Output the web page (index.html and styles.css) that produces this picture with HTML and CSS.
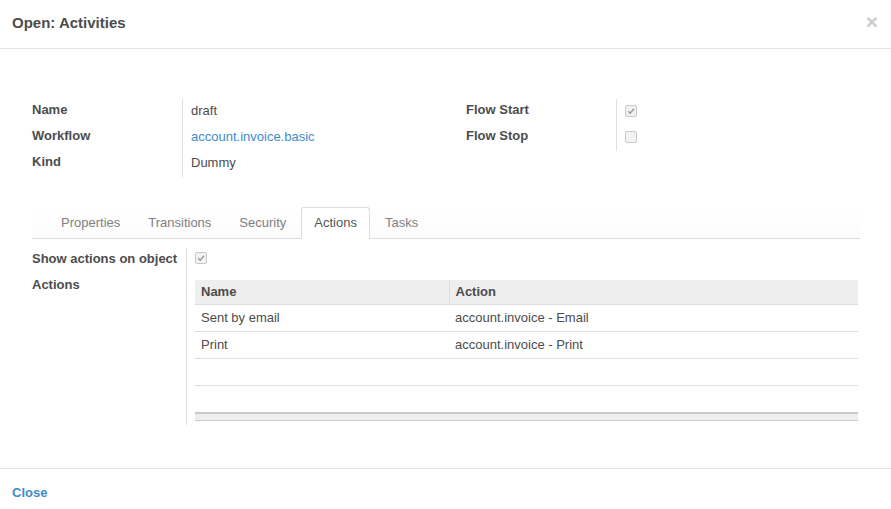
FILE: index.html
```html
<!DOCTYPE html>
<html>
<head>
<meta charset="utf-8">
<link rel="stylesheet" href="styles.css">
</head>
<body>
<div class="modal">
  <div class="modal-header">
    <h4 class="modal-title">Open: Activities</h4>
    <span class="close">×</span>
  </div>
  <div class="modal-body">
    <div class="groups">
      <div class="group group-left">
        <div class="lbl">Name</div><div class="val">draft</div>
        <div class="lbl">Workflow</div><div class="val"><a class="link">account.invoice.basic</a></div>
        <div class="lbl">Kind</div><div class="val">Dummy</div>
      </div>
      <div class="group group-right">
        <div class="lbl">Flow Start</div><div class="val"><span class="cb checked"><svg viewBox="0 0 12 12"><path d="M2.6 6.2 L5 8.6 L9.6 3.4" /></svg></span></div>
        <div class="lbl">Flow Stop</div><div class="val"><span class="cb"></span></div>
      </div>
    </div>
    <ul class="tabs">
      <li class="tab">Properties</li>
      <li class="tab">Transitions</li>
      <li class="tab">Security</li>
      <li class="tab active">Actions</li>
      <li class="tab">Tasks</li>
    </ul>
    <div class="tab-content">
      <div class="lbl2">Show actions on object</div>
      <div class="val2"><span class="cb checked"><svg viewBox="0 0 12 12"><path d="M2.6 6.2 L5 8.6 L9.6 3.4" /></svg></span></div>
      <div class="lbl2">Actions</div>
      <div class="val2 table-cell">
        <table class="list">
          <thead>
            <tr><th class="c1">Name</th><th class="c2">Action</th></tr>
          </thead>
          <tbody>
            <tr><td>Sent by email</td><td>account.invoice - Email</td></tr>
            <tr><td>Print</td><td>account.invoice - Print</td></tr>
            <tr><td>&nbsp;</td><td></td></tr>
            <tr class="last"><td>&nbsp;</td><td></td></tr>
          </tbody>
          <tfoot><tr><td colspan="2"></td></tr></tfoot>
        </table>
      </div>
    </div>
  </div>
  <div class="modal-footer">
    <a class="link bold">Close</a>
  </div>
</div>
</body>
</html>
```
FILE: styles.css
```css
html, body {
  margin: 0;
  padding: 0;
  background: #fff;
}
body {
  font-family: "Liberation Sans", Arial, sans-serif;
  font-size: 13px;
  color: #4c4c4c;
}
.modal {
  height: 509px;
  display: flex;
  flex-direction: column;
}
.modal-header {
  height: 48px;
  border-bottom: 1px solid #e5e5e5;
  display: flex;
  align-items: center;
  justify-content: space-between;
  padding: 0 12px;
  flex: none;
}
.modal-title {
  margin: 0;
  font-size: 15px;
  font-weight: bold;
  color: #4c4c4c;
  padding-bottom: 4px;
}
.close {
  font-size: 21px;
  font-weight: bold;
  color: #cccccc;
  line-height: 1;
  margin-right: 1px;
  padding-bottom: 6px;
}
.modal-body {
  flex: 1;
  padding: 50px 31px 0 32px;
}
.groups {
  display: flex;
}
.group {
  display: grid;
  grid-template-columns: 150px auto;
  grid-auto-rows: 26px;
}
.group-left {
  width: 434px;
  grid-template-columns: 150px 1fr;
}
.group-right {
  width: 200px;
}
.lbl {
  font-weight: bold;
  line-height: 22px;
}
.val {
  border-left: 1px solid #e0e0e0;
  padding-left: 8px;
  line-height: 24px;
}
.link {
  color: #428bca;
  text-decoration: none;
}
.bold {
  font-weight: bold;
}
.cb {
  display: inline-block;
  box-sizing: border-box;
  width: 12px;
  height: 12px;
  border: 1px solid #c8c8c8;
  border-radius: 2px;
  background: #f2f2f2;
  vertical-align: middle;
  margin-top: -2px;
}
.cb svg {
  display: block;
  width: 10px;
  height: 10px;
}
.cb svg path {
  fill: none;
  stroke: #9a9a9a;
  stroke-width: 1.8;
}
.tabs {
  list-style: none;
  margin: 30px 0 0 0;
  padding: 0 0 0 16px;
  display: flex;
  border-bottom: 1px solid #dddddd;
  height: 31px;
  background: linear-gradient(#ffffff, #fcfcfc);
}
.tab {
  padding: 0 12px;
  margin-right: 2px;
  line-height: 30px;
  color: #808080;
  border: 1px solid transparent;
  border-bottom: none;
  border-radius: 3px 3px 0 0;
  height: 31px;
  box-sizing: border-box;
}
.tab.active {
  color: #555555;
  border-color: #dddddd;
  background: #ffffff;
  height: 32px;
  margin-bottom: -1px;
}
.tab-content {
  display: grid;
  grid-template-columns: 154px 1fr;
  grid-template-rows: 26px auto;
  padding: 9px 2px 0 0;
}
.lbl2 {
  font-weight: bold;
  line-height: 22px;
}
.val2 {
  border-left: 1px solid #e0e0e0;
  padding-left: 8px;
  line-height: 20px;
}
.table-cell {
  padding-top: 6px;
  padding-bottom: 4px;
}
.list {
  width: 100%;
  border-collapse: collapse;
}
.list th {
  background: #eeeeee;
  text-align: left;
  font-weight: bold;
  height: 24px;
  padding: 0 6px;
  border-bottom: 1px solid #dddddd;
  box-sizing: border-box;
}
.list th.c1 {
  width: 254px;
}
.list th.c2 {
  border-left: 1px solid #dddddd;
}
.list td {
  height: 26px;
  padding: 0 6px;
  border-bottom: 1px solid #dddddd;
}
.list tr.last td {
  border-bottom: none;
}
.list tfoot td {
  height: 6px;
  padding: 0;
  background: #eeeeee;
  border-top: 2px solid #c8c8c8;
  border-bottom: 1px solid #cccccc;
}
.modal-footer {
  flex: none;
  border-top: 1px solid #e5e5e5;
  padding: 6px 12px 0;
  display: flex;
  align-items: center;
  box-sizing: border-box;
  height: 41px;
}
```
